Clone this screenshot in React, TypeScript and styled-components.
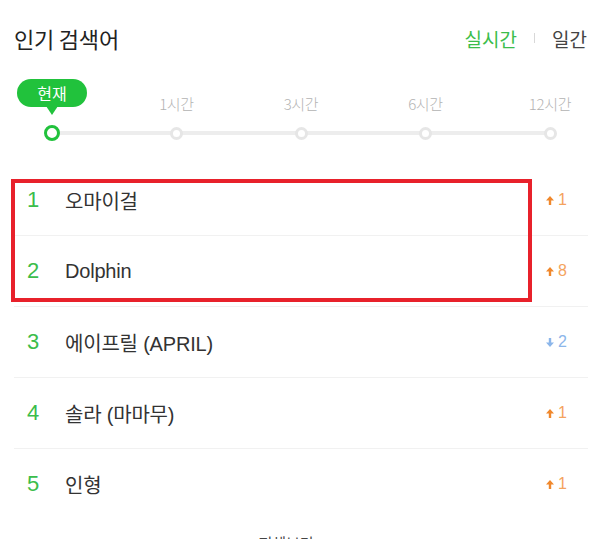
import React from "react";
import styled, { createGlobalStyle } from "styled-components";

const GlobalStyle = createGlobalStyle`
  html, body { margin: 0; padding: 0; background: #ffffff; }
  body {
    font-family: "Liberation Sans", "Noto Sans CJK KR", sans-serif;
    color: #222;
    -webkit-font-smoothing: antialiased;
  }
`;

const GREEN = "#3bbd4b";
const PILL = "#21c23c";
const ORANGE = "#f0882c";
const BLUE = "#8cb6ea";

const Page = styled.div`
  position: relative;
  width: 600px;
  height: 539px;
  overflow: hidden;
  background: #fff;
`;

const Header = styled.div`
  display: flex;
  align-items: center;
  justify-content: space-between;
  height: 76px;
  padding: 0 13px 0 14px;
`;

const Title = styled.h1`
  margin: 0;
  font-family: "Noto Sans CJK KR", sans-serif;
  font-size: 22px;
  font-weight: 400;
  color: #222;
  letter-spacing: -0.2px;
`;

const Tabs = styled.div`
  display: flex;
  align-items: center;
  gap: 17px;
`;

const Tab = styled.span<{ $active?: boolean }>`
  font-family: "Noto Sans CJK KR", sans-serif;
  font-size: 19px;
  color: ${(p) => (p.$active ? GREEN : "#444")};
`;

const Sep = styled.span`
  width: 1px;
  height: 10px;
  background: #d8d8d8;
`;

const Track = styled.div`
  position: relative;
  display: flex;
  justify-content: space-between;
  margin: 2px 50px 0 52px;
  &::before {
    content: "";
    position: absolute;
    left: 0;
    right: 0;
    top: 53px;
    height: 4px;
    background: #ededed;
  }
`;

const Stop = styled.div`
  position: relative;
  width: 0;
  display: flex;
  flex-direction: column;
  align-items: center;
`;

const LabelArea = styled.div`
  height: 38px;
  display: flex;
  flex-direction: column;
  justify-content: flex-end;
  align-items: center;
`;

const StopLabel = styled.span`
  white-space: nowrap;
  font-family: "Noto Sans CJK KR", sans-serif;
  font-size: 15px;
  font-weight: 300;
  line-height: 18px;
  margin-bottom: 3px;
  color: #b3b3b3;
  letter-spacing: -0.3px;
`;

const Pill = styled.span`
  position: relative;
  white-space: nowrap;
  height: 28px;
  line-height: 28px;
  padding: 0 20px;
  margin-bottom: 9px;
  border-radius: 14px;
  background: ${PILL};
  color: #fff;
  font-family: "Noto Sans CJK KR", sans-serif;
  font-size: 16px;
  &::after {
    content: "";
    position: absolute;
    left: 50%;
    bottom: -8px;
    margin-left: -6px;
    border-left: 6px solid transparent;
    border-right: 6px solid transparent;
    border-top: 9px solid ${PILL};
  }
`;

const DotWrap = styled.div`
  position: relative;
  z-index: 1;
  margin-top: 9px;
  height: 16px;
  display: flex;
  align-items: center;
  justify-content: center;
`;

const Dot = styled.span<{ $active?: boolean }>`
  box-sizing: border-box;
  display: block;
  width: ${(p) => (p.$active ? 16 : 13)}px;
  height: ${(p) => (p.$active ? 16 : 13)}px;
  border-radius: 50%;
  background: #fff;
  border: ${(p) => (p.$active ? `3.5px solid ${PILL}` : "3px solid #e6e6e6")};
`;

const List = styled.ol`
  position: relative;
  list-style: none;
  margin: 24px 12px 0 14px;
  padding: 0;
`;

const Row = styled.li`
  display: flex;
  align-items: center;
  height: 70px;
  padding: 0 21px 0 13px;
  border-bottom: 1px solid #f1f1f1;
  &:last-of-type {
    border-bottom: none;
  }
`;

const Rank = styled.span`
  width: 38px;
  font-size: 22px;
  color: ${GREEN};
`;

const Keyword = styled.span`
  flex: 1;
  font-size: 20px;
  color: #333;
  letter-spacing: -0.2px;
`;

const Change = styled.span<{ $dir: "up" | "down" }>`
  display: flex;
  align-items: center;
  gap: 4px;
  font-size: 16px;
  color: ${(p) => (p.$dir === "up" ? "#f4a35e" : BLUE)};
  svg {
    color: ${(p) => (p.$dir === "up" ? ORANGE : BLUE)};
  }
`;

const Highlight = styled.div`
  position: absolute;
  left: -3px;
  top: 14px;
  width: 521px;
  height: 123px;
  box-sizing: border-box;
  border: 4px solid #e8212b;
  pointer-events: none;
`;

const Footer = styled.div`
  display: flex;
  justify-content: center;
  padding: 13px 28px 0 0;
  font-family: "Noto Sans CJK KR", sans-serif;
  font-size: 15px;
  color: #444;
`;

const Arrow = ({ dir }: { dir: "up" | "down" }) => (
  <svg
    width="8"
    height="9"
    viewBox="0 0 8 9"
    style={{ transform: dir === "down" ? "rotate(180deg)" : undefined }}
  >
    <path d="M4 0 L8 4.5 L5.2 4.5 L5.2 9 L2.8 9 L2.8 4.5 L0 4.5 Z" fill="currentColor" />
  </svg>
);

const stops = ["현재", "1시간", "3시간", "6시간", "12시간"];

const items: { rank: number; word: string; dir: "up" | "down"; n: number }[] = [
  { rank: 1, word: "오마이걸", dir: "up", n: 1 },
  { rank: 2, word: "Dolphin", dir: "up", n: 8 },
  { rank: 3, word: "에이프릴 (APRIL)", dir: "down", n: 2 },
  { rank: 4, word: "솔라 (마마무)", dir: "up", n: 1 },
  { rank: 5, word: "인형", dir: "up", n: 1 },
];

export default function App() {
  return (
    <>
      <GlobalStyle />
      <Page>
        <Header>
          <Title>인기 검색어</Title>
          <Tabs>
            <Tab $active>실시간</Tab>
            <Sep />
            <Tab>일간</Tab>
          </Tabs>
        </Header>
        <Track>
          {stops.map((s, i) => (
            <Stop key={s}>
              <LabelArea>
                {i === 0 ? <Pill>{s}</Pill> : <StopLabel>{s}</StopLabel>}
              </LabelArea>
              <DotWrap>
                <Dot $active={i === 0} />
              </DotWrap>
            </Stop>
          ))}
        </Track>
        <List>
          {items.map((it) => (
            <Row key={it.rank}>
              <Rank>{it.rank}</Rank>
              <Keyword>{it.word}</Keyword>
              <Change $dir={it.dir}>
                <Arrow dir={it.dir} />
                {it.n}
              </Change>
            </Row>
          ))}
          <Highlight />
        </List>
        <Footer>전체보기</Footer>
      </Page>
    </>
  );
}
